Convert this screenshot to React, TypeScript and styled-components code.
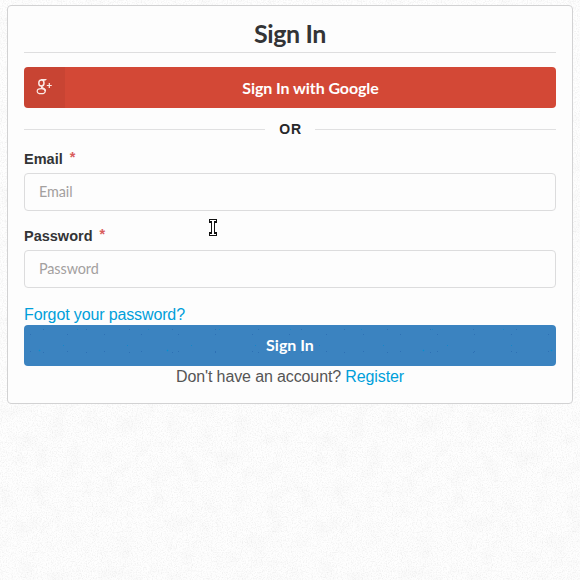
import React from "react";
import styled, { createGlobalStyle, css } from "styled-components";

const noise = (freq: string, seed: number, matrix: string) =>
  `url("data:image/svg+xml,${encodeURIComponent(
    `<svg xmlns='http://www.w3.org/2000/svg' width='300' height='300'><filter id='n' x='0' y='0' width='100%' height='100%' color-interpolation-filters='sRGB'><feTurbulence type='fractalNoise' baseFrequency='${freq}' numOctaves='2' seed='${seed}' stitchTiles='stitch'/><feColorMatrix values='${matrix}'/></filter><rect width='300' height='300' filter='url(#n)'/></svg>`
  )}")`;

const grain = noise("0.8", 4, "0 0 0 0 0  0 0 0 0 0  0 0 0 0 0  0.14 0 0 0 -0.062");
const clouds = noise("0.06", 9, "0 0 0 0 0  0 0 0 0 0  0 0 0 0 0  0.04 0 0 0 -0.019");

const GlobalStyle = createGlobalStyle`
  *, *::before, *::after { box-sizing: border-box; }
  html, body { margin: 0; height: 100%; }
  body {
    background: ${grain}, ${clouds}, #fefefe;
    font-family: "Liberation Sans", Arial, sans-serif;
    overflow: hidden;
  }
`;

const Page = styled.main`
  position: relative;
  height: 580px;
  padding: 5px 7px 0;
`;

const Panel = styled.section`
  height: 399px;
  padding: 13px 16px 0;
  border: 1px solid #d2d2d3;
  border-radius: 4px;
  background: #fdfdfd;
  display: flex;
  flex-direction: column;
`;

const Title = styled.h1`
  margin: 0 0 14px;
  height: 34px;
  border-bottom: 1px solid #dededf;
  color: #333436;
  font: 700 25px/29px Lato, sans-serif;
  letter-spacing: -0.4px;
  text-align: center;
`;

const buttonBase = css`
  flex: none;
  width: 100%;
  height: 41px;
  padding: 0;
  border: 0;
  border-radius: 4px;
  color: #fff;
  font: 700 16px/41px Lato, sans-serif;
  letter-spacing: -0.08px;
  overflow: hidden;
`;

const GoogleButton = styled.button`
  ${buttonBase}
  display: flex;
  background: #d34836;
`;

const IconCell = styled.span`
  flex: none;
  width: 41px;
  height: 41px;
  background: rgba(0, 0, 0, 0.05);
`;

const GoogleLabel = styled.span`
  flex: 1;
  text-align: center;
`;

const SubmitButton = styled.button`
  ${buttonBase}
  padding-bottom: 2px;
  line-height: 39px;
  letter-spacing: 0;
  background:
    radial-gradient(circle at 13.5px 25.5px, #078fd0 0.7px, transparent 1.1px) 2px 0 / 128px 41px,
    radial-gradient(circle at 37.5px 20.5px, #1586c8 0.6px, transparent 1px) 2px 0 / 64px 41px,
    radial-gradient(circle at 6.5px 9.5px, #2d70b4 0.5px, transparent 0.9px) 0 0 / 37px 17px,
    radial-gradient(circle at 19.5px 4.5px, #2d70b4 0.5px, transparent 0.9px) 0 0 / 43px 23px,
    radial-gradient(circle at 25.5px 4.5px, #138bc9 0.6px, transparent 1px) 28px 0 / 71px 41px,
    #3b83c0;
`;

const Divider = styled.div`
  display: flex;
  align-items: center;
  height: 20px;
  margin-top: 11px;
  color: #262729;
  font-size: 14px;
  font-weight: 700;
  letter-spacing: 0.7px;

  &::before, &::after {
    content: "";
    flex: 1;
    height: 1px;
    background: #e0e0e1;
  }
  &::before { margin-right: 14px; }
  &::after { margin-left: 13px; }
`;

const Field = styled.label<{ $gap: number }>`
  display: block;
  margin-top: ${(p) => p.$gap}px;
`;

const FieldName = styled.span`
  display: flex;
  height: 24px;
  color: #333436;
  font-size: 14.5px;
  font-weight: 700;
  line-height: 20px;
`;

const Required = styled.span`
  margin: -2px 0 0 7px;
  color: #d95c5c;
  font-size: 14.4px;
`;

const Input = styled.input`
  display: block;
  width: 100%;
  height: 38px;
  padding: 0 14px 2px;
  border: 1px solid #dcdcdd;
  border-radius: 4px;
  background: #fdfdfd;
  font: 14.4px Lato, sans-serif;
  letter-spacing: -0.1px;
  outline: 0;

  &::placeholder { color: #a3a09f; opacity: 1; }
`;

const Link = styled.a`
  color: #009fda;
  text-decoration: none;
`;

const Forgot = styled.div`
  height: 20px;
  margin-top: 17px;
  font-size: 16px;
  line-height: 20px;
  letter-spacing: -0.13px;
`;

const Register = styled.p`
  margin: 0;
  color: #555;
  font-size: 16px;
  line-height: 22px;
  letter-spacing: -0.12px;
  text-align: center;
`;

const Cursor = styled.svg`
  position: absolute;
  left: 209px;
  top: 219px;
`;

const GooglePlus = () => (
  <svg width="41" height="41" viewBox="0 0 41 41" fill="none" stroke="#fbe9e5">
    <ellipse cx="17.4" cy="16" rx="2.6" ry="3.1" strokeWidth="1.5" />
    <path d="M17 12.5H22.3L20.5 13.5H18.5" strokeWidth="1" />
    <path d="M19.3 18.2Q16.5 19.8 18.2 20.8Q21.8 22.2 21.2 24.3" strokeWidth="1.5" />
    <ellipse cx="17.2" cy="24.2" rx="4" ry="2.5" strokeWidth="1.2" />
    <path d="M22.8 18.5h5M25.3 16v5" strokeWidth="1.2" />
  </svg>
);

export default function App() {
  return (
    <>
      <GlobalStyle />
      <Page>
        <Panel>
          <Title>Sign In</Title>
          <GoogleButton type="button">
            <IconCell><GooglePlus /></IconCell>
            <GoogleLabel>Sign In with Google</GoogleLabel>
          </GoogleButton>
          <Divider>OR</Divider>
          <Field $gap={10}>
            <FieldName>Email<Required>*</Required></FieldName>
            <Input type="email" placeholder="Email" />
          </Field>
          <Field $gap={15}>
            <FieldName>Password<Required>*</Required></FieldName>
            <Input type="password" placeholder="Password" />
          </Field>
          <Forgot><Link>Forgot your password?</Link></Forgot>
          <SubmitButton type="button">Sign In</SubmitButton>
          <Register>Don't have an account? <Link>Register</Link></Register>
        </Panel>
        <Cursor width="8" height="17" viewBox="0 0 8 17" shapeRendering="crispEdges">
          <path d="M0 0H8V4H6V13H8V17H0V13H2V4H0Z" fill="#111" />
          <path d="M1 1H7V2H5V15H7V16H1V15H3V2H1Z" fill="#fff" />
        </Cursor>
      </Page>
    </>
  );
}
